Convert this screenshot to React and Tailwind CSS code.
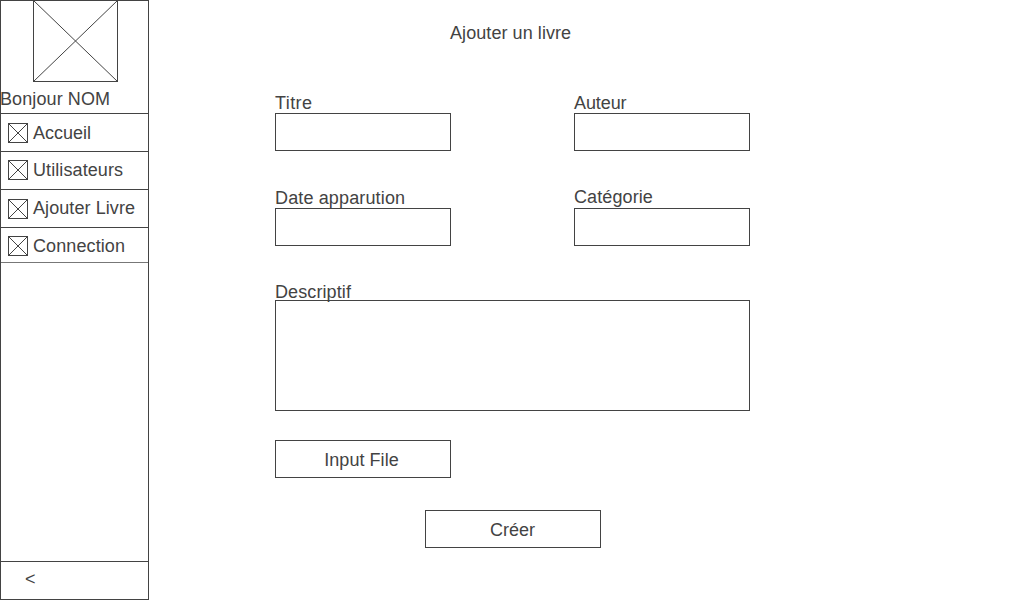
function Placeholder({ width, height, className }) {
  return (
    <svg
      width={width}
      height={height}
      viewBox={`0 0 ${width} ${height}`}
      fill="none"
      stroke="#434343"
      strokeWidth="1"
      className={`block shrink-0 ${className}`}
    >
      <rect x="0.5" y="0.5" width={width - 1} height={height - 1} />
      <path d={`M0.5 0.5L${width - 0.5} ${height - 0.5}M${width - 0.5} 0.5L0.5 ${height - 0.5}`} />
    </svg>
  );
}

const links = [
  { label: "Accueil", row: "h-[38px]", icon: "mt-[9px]", text: "mt-[9px]" },
  { label: "Utilisateurs", row: "h-[38px]", icon: "mt-2", text: "mt-2 tracking-[0.09px]" },
  { label: "Ajouter Livre", row: "h-[38px]", icon: "mt-[9px]", text: "mt-2 tracking-[0.08px]" },
  { label: "Connection", row: "h-[35px]", icon: "mt-2", text: "mt-2 tracking-[0.1px]" },
];

function Sidebar() {
  return (
    <aside className="flex h-[600px] w-[149px] shrink-0 flex-col border border-[#434343]">
      <Placeholder width={85} height={82} className="-mt-px ml-8" />
      <p className="-ml-px mt-[7px] mb-1 tracking-[0.1px]">Bonjour NOM</p>
      <nav className="border-b border-[#777777]">
        {links.map((link) => (
          <a key={link.label} className={`flex items-start gap-[5px] border-t border-[#434343] pl-[7px] ${link.row}`}>
            <Placeholder width={20} height={20} className={link.icon} />
            <span className={link.text}>{link.label}</span>
          </a>
        ))}
      </nav>
      <div className="mt-auto h-[38px] border-t border-[#434343] pt-[7px] pl-6">&lt;</div>
    </aside>
  );
}

function Field({ label, className = "", labelClass }) {
  return (
    <label className={`flex w-44 flex-col ${className}`}>
      <span className={labelClass}>{label}</span>
      <input className="h-[38px] w-full border border-[#434343] px-2 outline-none" />
    </label>
  );
}

export default function App() {
  return (
    <div className="flex h-[600px] w-[1024px] overflow-hidden bg-white font-['Liberation_Sans',Arial,sans-serif] text-[18px] leading-[20px] whitespace-nowrap text-[#434343]">
      <Sidebar />
      <main className="flex flex-col pt-[23px] pl-[126px]">
        <h1 className="ml-[175px] tracking-[0.07px]">Ajouter un livre</h1>
        <form className="mt-[50px] flex w-[475px] flex-col">
          <div className="flex justify-between">
            <Field label="Titre" labelClass="h-5 tracking-[0.4px]" />
            <Field label="Auteur" labelClass="h-5 tracking-[-0.1px]" />
          </div>
          <div className="mt-9 flex justify-between">
            <Field label="Date apparution" className="pt-px" labelClass="h-5 tracking-[0.14px]" />
            <Field label="Catégorie" labelClass="h-[21px] tracking-[0.1px]" />
          </div>
          <label className="mt-9 flex flex-col">
            <span className="z-10 h-[18px] tracking-[0.1px]">Descriptif</span>
            <textarea className="block h-[111px] resize-none border border-[#434343] px-2 outline-none" />
          </label>
          <button type="button" className="mt-[29px] h-[38px] w-44 border border-[#434343] pt-0.5 pr-[3px] tracking-[0.05px]">
            Input File
          </button>
          <button type="button" className="mt-8 ml-[150px] h-[38px] w-44 border border-[#434343] pt-0.5 pr-px">
            Créer
          </button>
        </form>
      </main>
    </div>
  );
}
